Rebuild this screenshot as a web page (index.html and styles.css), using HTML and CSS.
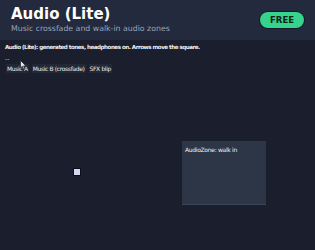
FILE: index.html
```html
<!DOCTYPE html>
<html lang="en">
<head>
  <meta charset="UTF-8">
  <title>Audio (Lite)</title>
  <link rel="stylesheet" href="styles.css">
</head>
<body>
  <header class="topbar">
    <div class="titles">
      <h1>Audio (Lite)</h1>
      <p class="subtitle">Music crossfade and walk-in audio zones</p>
    </div>
    <span class="badge">FREE</span>
  </header>

  <main class="stage">
    <p class="info">Audio (Lite): generated tones, headphones on. Arrows move the square.</p>
    <p class="status">--</p>
    <div class="controls">
      <button>Music A</button>
      <button>Music B (crossfade)</button>
      <button>SFX blip</button>
    </div>

    <div class="zone">AudioZone: walk in</div>
    <div class="player"></div>

    <!-- mouse pointer caught in the capture -->
    <svg class="cursor" width="7" height="10" viewBox="0 0 7 10">
      <path d="M0.5 0.5 L0.5 8 L2.3 6.3 L3.6 9.3 L4.8 8.8 L3.6 5.9 L6 5.9 Z" fill="#e6e8ee" stroke="#2a2f3c" stroke-width="0.8"/>
    </svg>
  </main>
</body>
</html>
```

FILE: styles.css
```css
* {
  margin: 0;
  padding: 0;
  box-sizing: border-box;
}

body {
  font-family: "DejaVu Sans", sans-serif;
  background: #1b1f2d;
  color: #e8eaf0;
  width: 315px;
  height: 250px;
  overflow: hidden;
}

.topbar {
  height: 40px;
  background: #232a3d;
  display: flex;
  align-items: center;
  justify-content: space-between;
  padding: 0 11px;
}

h1 {
  font-size: 15px;
  font-weight: bold;
  color: #ffffff;
  line-height: 16px;
  margin-top: -2px;
}

.subtitle {
  font-size: 7.8px;
  color: #9aa3b5;
  margin-top: 2px;
}

.badge {
  background: #35d38d;
  color: #0d1f17;
  font-size: 8.5px;
  font-weight: bold;
  padding: 3px 10px;
  border-radius: 8px;
  box-shadow: 0 0 0 1px #151a26;
}

.stage {
  position: relative;
  height: 210px;
  padding: 4px 5px;
}

.info {
  font-size: 5.6px;
  font-weight: bold;
  letter-spacing: -0.5px;
  line-height: 7px;
  color: #f0f0f5;
}

.status {
  font-size: 6px;
  line-height: 6px;
  margin-top: 5px;
  color: #c8ccd6;
}

.controls {
  display: flex;
  gap: 3px;
  margin-top: 2px;
  padding-left: 1px;
}

.controls button {
  font-family: "DejaVu Sans", sans-serif;
  font-size: 6px;
  letter-spacing: -0.35px;
  line-height: 7px;
  color: #e8eaf0;
  background: #232836;
  border: none;
  padding: 1px 1px;
}

.zone {
  position: absolute;
  left: 182px;
  top: 101px;
  width: 84px;
  height: 64px;
  background: #2c3646;
  border-bottom: 1px solid #3a4556;
  font-size: 6px;
  letter-spacing: -0.3px;
  padding: 5px 3px;
  color: #f0f0f5;
}

.player {
  position: absolute;
  left: 74px;
  top: 129px;
  width: 6px;
  height: 6px;
  background: #d6d6ee;
  outline: 1px solid #0c0f18;
}

.cursor {
  position: absolute;
  left: 20px;
  top: 20px;
}
```
